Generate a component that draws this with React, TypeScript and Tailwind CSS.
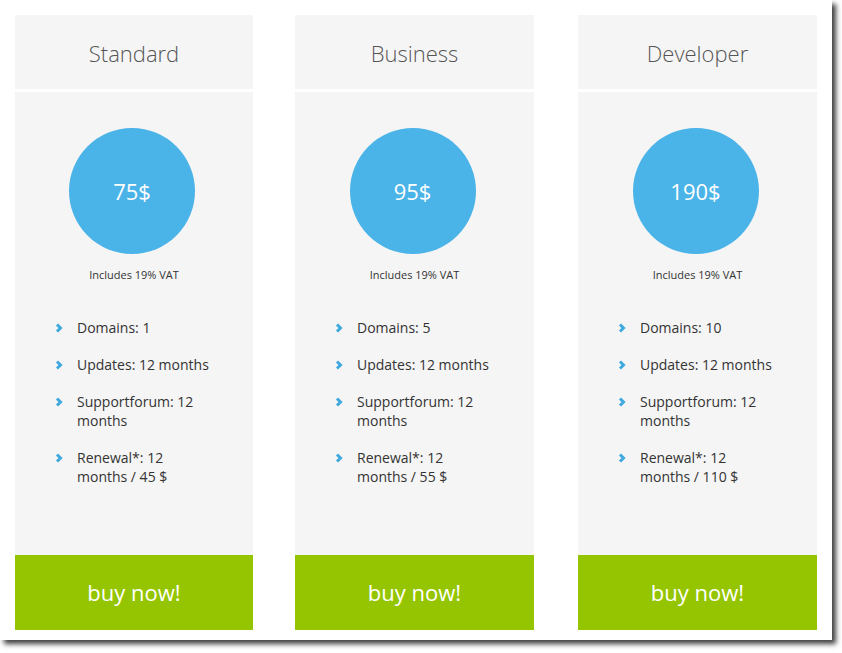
const PLANS = [
  {
    name: 'Standard',
    price: '75$',
    gap: 'ml-[15px] w-[238px]',
    features: ['Domains: 1', 'Updates: 12 months', 'Supportforum: 12 months', 'Renewal*: 12 months / 45 $'],
  },
  {
    name: 'Business',
    price: '95$',
    gap: 'ml-[42px] w-[239px]',
    features: ['Domains: 5', 'Updates: 12 months', 'Supportforum: 12 months', 'Renewal*: 12 months / 55 $'],
  },
  {
    name: 'Developer',
    price: '190$',
    gap: 'ml-[44px] w-[239px]',
    features: ['Domains: 10', 'Updates: 12 months', 'Supportforum: 12 months', 'Renewal*: 12 months / 110 $'],
  },
];

function Chevron() {
  return (
    <svg width="8" height="10" viewBox="0 0 8 10" className="shrink-0 mt-[5px]">
      <polyline points="2,1.5 5.5,5 2,8.5" fill="none" stroke="#3fa9de" strokeWidth="3" />
    </svg>
  );
}

export default function App() {
  return (
    <div className="w-[842px] h-[653px] bg-white font-['Open_Sans',sans-serif]">
      <div className="w-[832px] h-[640px] bg-white shadow-[4px_4px_5px_rgba(0,0,0,0.75)] flex items-start pt-[15px]">
        {PLANS.map((plan) => (
          <div key={plan.name} className={`${plan.gap} h-[615px] flex flex-col`}>

            {/* Title */}
            <div className="h-[74px] bg-[#f5f5f5] flex items-center justify-center pt-[3px]">
              <span className="text-[22px] font-light text-[#555]">{plan.name}</span>
            </div>

            {/* Price + features */}
            <div className="mt-[3px] flex-1 bg-[#f5f5f5] flex flex-col items-center">
              <div className="mt-[36px] mr-[4px] w-[126px] h-[126px] rounded-full bg-[#4ab3e8] flex items-center justify-center">
                <span className="text-[22px] text-white">{plan.price}</span>
              </div>
              <p className="mt-[13px] text-[11px] leading-[15px] text-[#333]">Includes 19% VAT</p>

              <ul className="self-start ml-[40px] mt-[36px] flex flex-col gap-[18px]">
                {plan.features.map((f) => (
                  <li key={f} className="flex gap-[14px]">
                    <Chevron />
                    <span className="w-[136px] text-[14px] leading-[19px] text-[#333]">{f}</span>
                  </li>
                ))}
              </ul>
            </div>

            {/* Buy button */}
            <button className="h-[75px] bg-[#95c500] flex items-center justify-center">
              <span className="text-[22px] text-white">buy now!</span>
            </button>

          </div>
        ))}
      </div>
    </div>
  );
}
